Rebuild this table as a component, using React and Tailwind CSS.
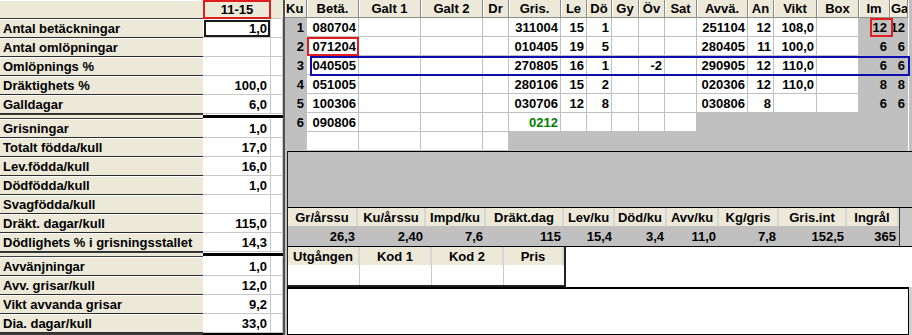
import React from "react";

const groups = [
  [
    ["Antal betäckningar", "1,0"],
    ["Antal omlöpningar", ""],
    ["Omlöpnings %", ""],
    ["Dräktighets %", "100,0"],
    ["Galldagar", "6,0"],
  ],
  [
    ["Grisningar", "1,0"],
    ["Totalt födda/kull", "17,0"],
    ["Lev.födda/kull", "16,0"],
    ["Dödfödda/kull", "1,0"],
    ["Svagfödda/kull", ""],
    ["Dräkt. dagar/kull", "115,0"],
    ["Dödlighets % i grisningsstallet", "14,3"],
  ],
  [
    ["Avvänjningar", "1,0"],
    ["Avv. grisar/kull", "12,0"],
    ["Vikt avvanda grisar", "9,2"],
    ["Dia. dagar/kull", "33,0"],
  ],
];

const heads = ["Ku", "Betä.", "Galt 1", "Galt 2", "Dr", "Gris.", "Le", "Dö", "Gy", "Öv", "Sat", "Avvä.", "An", "Vikt", "Box", "Im", "Ga"];

// [values, last white column]
const rows = [
  [["1", "080704", "", "", "", "311004", "15", "1", "", "", "", "251104", "12", "108,0", "", "12", "12"], 14],
  [["2", "071204", "", "", "", "010405", "19", "5", "", "", "", "280405", "11", "100,0", "", "6", "6"], 14],
  [["3", "040505", "", "", "", "270805", "16", "1", "", "-2", "", "290905", "12", "110,0", "", "6", "6"], 14],
  [["4", "051005", "", "", "", "280106", "15", "2", "", "", "", "020306", "12", "110,0", "", "8", "8"], 14],
  [["5", "100306", "", "", "", "030706", "12", "8", "", "", "", "030806", "8", "", "", "6", "6"], 14],
  [["6", "090806", "", "", "", "0212", "", "", "", "", "", "", "", "", "", "", ""], 10],
  [["", "", "", "", "", "", "", "", "", "", "", "", "", "", "", "", ""], 4],
];

const stats = [
  ["Gr/årssu", "26,3", "w-[70px]"],
  ["Ku/årssu", "2,40", "w-[68px]"],
  ["Impd/ku", "7,6", "w-[60px]"],
  ["Dräkt.dag", "115", "w-[78px]"],
  ["Lev/ku", "15,4", "w-[51px]"],
  ["Död/ku", "3,4", "w-[52px]"],
  ["Avv/ku", "11,0", "w-[52px]"],
  ["Kg/gris", "7,8", "w-[60px]"],
  ["Gris.int", "152,5", "w-[68px]"],
  ["Ingrål", "365", "w-[52px]"],
];

const utg = [
  ["Utgången", "w-[72px]"],
  ["Kod 1", "w-[72px]"],
  ["Kod 2", "w-[72px]"],
  ["Pris", "w-[60px]"],
];

function LeftRow({ label, value, boxed }) {
  return (
    <div className="grid h-[19px] grid-cols-[203px_68px_12px]">
      <div className="flex items-center whitespace-nowrap border-b border-[#2c2c2c] bg-[#ece9d8] pl-[3px] shadow-[inset_0_1px_0_#fff]">
        {label}
      </div>
      <div
        className={
          "flex items-center justify-end border-b border-r border-[#c8c8c8] bg-white pr-[3px] " +
          (boxed ? "outline-2 outline-offset-[-3px] outline-[#1a1a1a]" : "")
        }
      >
        {value}
      </div>
      <div className="border-b border-r border-[#c8c8c8] bg-white" />
    </div>
  );
}

function Sep({ last }) {
  return (
    <div className={"grid grid-cols-[203px_80px] " + (last ? "h-[2px]" : "h-[5px]")}>
      <div className={last ? "bg-[#3c3c3c]" : "border-y border-[#3c3c3c] bg-[#ece9d8]"} />
      <div className="flex items-center bg-white">
        <div className={"w-full bg-black " + (last ? "h-[2px]" : "h-[3px]")} />
      </div>
    </div>
  );
}

function LeftPanel() {
  return (
    <div className="w-[285px] shrink-0 border-r-2 border-[#505050]">
      <div className="grid h-[19px] grid-cols-[203px_68px_12px]">
        <div className="border-b border-[#3c3c3c] bg-[#ece9d8] shadow-[inset_0_1px_0_#fff]" />
        <div className="flex items-center justify-center bg-[#ece9d8] outline-2 outline-offset-[-2px] outline-[#e01e1e]">
          11-15
        </div>
        <div className="border-b border-[#c8c8c8] bg-[#ece9d8]" />
      </div>
      {groups.map((g, gi) => (
        <div key={gi}>
          {g.map(([l, v], i) => (
            <LeftRow key={l} label={l} value={v} boxed={gi === 0 && i === 0} />
          ))}
          <Sep last={gi === groups.length - 1} />
        </div>
      ))}
    </div>
  );
}

function Table() {
  return (
    <div className="relative flex h-[151px]">
      <div className="grid w-[623px] grid-cols-[22px_52px_62px_62px_26px_52px_26px_25px_27px_26px_32px_51px_26px_43px_42px_31px_18px] grid-rows-[18px_repeat(7,19px)]">
        {heads.map((h, i) => (
          <div
            key={h}
            className={
              "flex items-center overflow-hidden whitespace-nowrap border-b border-r border-[#8c8c8c] bg-[#ece9d8] shadow-[inset_1px_0_0_#fff] " +
              (i === 0 || i === 16 ? "pl-[1px]" : "justify-center")
            }
          >
            {h}
          </div>
        ))}
        {rows.map(([vals, lastWhite], r) =>
          vals.map((v, c) => {
            const white = c >= 1 && c <= lastWhite;
            return (
              <div
                key={r + "-" + c}
                className={
                  "flex items-center justify-end overflow-hidden whitespace-nowrap border-b border-r border-[#c0c0c0] pr-[2px] " +
                  (white ? "bg-white" : "bg-[#c0c0c0]") +
                  (r === 5 && c === 5 ? " text-[#008000]" : "") +
                  (r === 1 && c === 1 ? " outline-2 outline-offset-[-2px] outline-[#e01e1e]" : "")
                }
              >
                {v}
              </div>
            );
          })
        )}
      </div>
      <div className="w-[4px] border-l border-white bg-[#c0c0c0]" />
      <div className="absolute left-[25px] top-[56px] h-[20px] w-[600px] border-2 border-[#0c0cb0]" />
      <div className="absolute left-[585px] top-[18px] h-[19px] w-[23px] border-2 border-[#e01e1e]" />
    </div>
  );
}

function Lower() {
  return (
    <div className="bg-[#c0c0c0] pl-[2px]">
      <div className="border-l border-[#202020]">
        <div className="h-[57px] border-y border-black bg-[#c0c0c0]" />
        <div className="flex">
          <div className="flex flex-col">
            <div className="flex h-[18px]">
              {stats.map(([h, , w]) => (
                <div
                  key={h}
                  className={"flex items-center justify-center border-r-2 border-[#d6d6d6] bg-[#ece9d8] " + w}
                >
                  {h}
                </div>
              ))}
            </div>
            <div className="flex h-[20px] bg-[#c0c0c0]">
              {stats.map(([h, v, w]) => (
                <div key={h} className={"flex items-center justify-end pr-[3px] " + w}>
                  {v}
                </div>
              ))}
            </div>
          </div>
          <div className="flex-1 border-l border-[#404040] bg-[#c8c8c8]" />
        </div>
        <div className="h-px bg-black" />
        <div className="flex bg-white">
          <div className="border-b-2 border-r-2 border-[#202020]">
            <div className="flex h-[18px]">
              {utg.map(([h, w]) => (
                <div
                  key={h}
                  className={"flex items-center justify-center border-r-2 border-[#d6d6d6] bg-[#ece9d8] " + w}
                >
                  {h}
                </div>
              ))}
            </div>
            <div className="flex h-[20px]">
              {utg.map(([h, w], i) => (
                <div key={h} className={"bg-white " + w + (i < 3 ? " border-r border-[#c8c8c8]" : "")} />
              ))}
            </div>
          </div>
          <div className="flex-1 bg-white" />
        </div>
      </div>
    </div>
  );
}

export default function App() {
  return (
    <div className="flex h-[335px] w-[912px] overflow-hidden bg-white font-['Liberation_Sans',Arial,sans-serif] text-[13px] font-bold leading-none text-black">
      <LeftPanel />
      <div className="flex w-[627px] flex-col">
        <Table />
        <Lower />
        <div className="flex flex-1 bg-[#c0c0c0] pl-[2px]">
          <div className="flex-1 border border-t-2 border-black bg-white" />
          <div className="w-[3px] bg-[#d0d0d0]" />
        </div>
      </div>
    </div>
  );
}
